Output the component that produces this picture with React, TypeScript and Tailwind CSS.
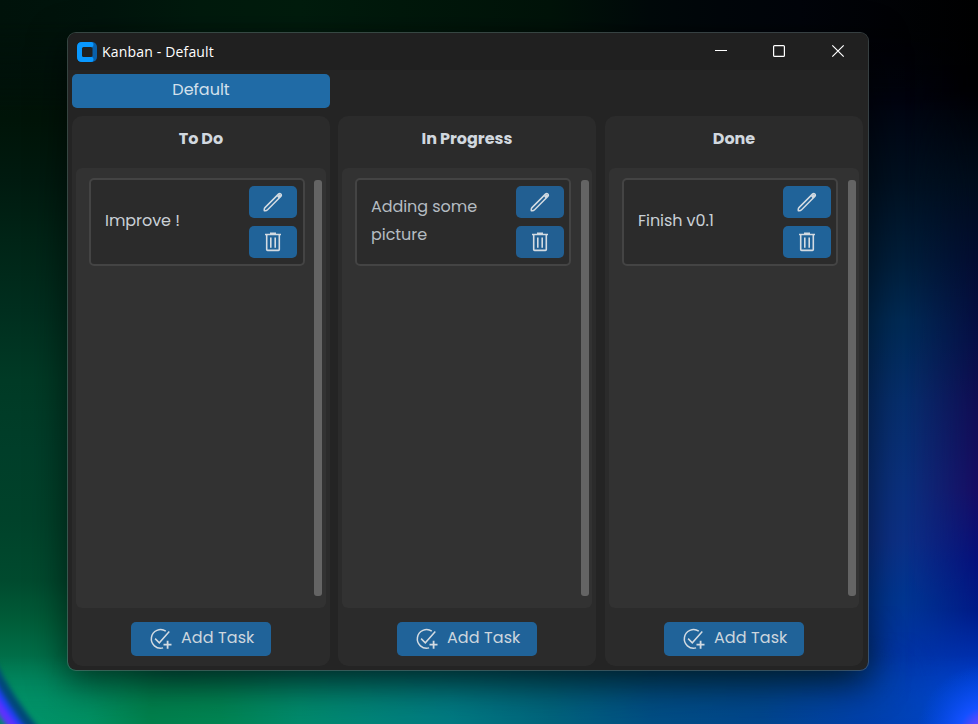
import React from "react";

type ColumnData = { title: string; task: string[]; mid?: boolean; wide?: boolean; x: string };

const COLUMNS: ColumnData[] = [
  { title: "To Do", task: ["Improve !"], x: "ml-0" },
  { title: "In Progress", task: ["Adding some", "picture"], mid: true, wide: true, x: "ml-2" },
  { title: "Done", task: ["Finish v0.1"], wide: true, x: "ml-[9px]" },
];

type Stop = [number, string];

const LEFT: Stop[] = [
  [0, "#00120a"], [60, "#01100a"], [120, "#001408"], [180, "#001a0f"], [240, "#002416"], [310, "#002e1e"],
  [380, "#003a25"], [450, "#003e29"], [520, "#00422a"], [580, "#004a2e"], [620, "#005c38"], [660, "#00704a"], [700, "#008860"],
];
const RIGHT_INNER: Stop[] = [
  [0, "#000306"], [100, "#010410"], [180, "#001020"], [260, "#001e3a"], [320, "#002a54"], [400, "#062e6c"],
  [480, "#0a307c"], [540, "#0c3086"], [600, "#003692"], [650, "#0034a4"], [700, "#0040b4"],
];
const RIGHT_OUTER: Stop[] = [
  [0, "#000000"], [90, "#000003"], [180, "#000c1a"], [260, "#020c30"], [340, "#060e45"], [400, "#100c52"],
  [490, "#170c62"], [560, "#06107a"], [610, "#001a86"], [650, "#002ca8"], [700, "#0040d0"],
];
const BOTTOM: Stop[] = [
  [40, "#009268"], [90, "#009062"], [150, "#00804c"], [220, "#008452"], [300, "#008a6c"], [370, "#008478"], [450, "#007a82"],
  [550, "#00647c"], [650, "#004e84"], [760, "#00468c"], [860, "#0040a8"], [920, "#0042bc"], [978, "#0048e0"],
];
const TOP: Stop[] = [
  [0, "#00120a"], [100, "#00140c"], [200, "#001a0d"], [300, "#001c0d"], [400, "#00180b"], [550, "#001309"],
  [650, "#00090a"], [720, "#00060a"], [800, "#01040a"], [978, "#000000"],
];

function Ramp({ id, stops, across }: { id: string; stops: Stop[]; across?: boolean }) {
  return (
    <linearGradient
      id={id}
      gradientUnits="userSpaceOnUse"
      x1="0"
      y1="0"
      x2={across ? 978 : 0}
      y2={across ? 0 : 724}
    >
      {stops.map(([at, color]) => (
        <stop key={at} offset={at / (across ? 978 : 724)} stopColor={color} />
      ))}
    </linearGradient>
  );
}

function Wallpaper() {
  return (
    <svg className="absolute inset-0" width="978" height="724" viewBox="0 0 978 724">
      <defs>
        <Ramp id="left" stops={LEFT} />
        <Ramp id="inner" stops={RIGHT_INNER} />
        <Ramp id="outer" stops={RIGHT_OUTER} />
        <Ramp id="bottom" stops={BOTTOM} across />
        <Ramp id="top" stops={TOP} across />
        <linearGradient id="fadeRight" gradientUnits="userSpaceOnUse" x1="905" y1="0" x2="978" y2="0">
          <stop offset="0" stopColor="#000" />
          <stop offset="1" stopColor="#fff" />
        </linearGradient>
        <linearGradient id="fadeDown" gradientUnits="userSpaceOnUse" x1="0" y1="655" x2="0" y2="722">
          <stop offset="0" stopColor="#000" />
          <stop offset="1" stopColor="#fff" />
        </linearGradient>
        <linearGradient id="fadeUp" gradientUnits="userSpaceOnUse" x1="0" y1="20" x2="0" y2="110">
          <stop offset="0" stopColor="#fff" />
          <stop offset="1" stopColor="#000" />
        </linearGradient>
        <mask id="maskRight"><rect width="978" height="724" fill="url(#fadeRight)" /></mask>
        <mask id="maskDown"><rect width="978" height="724" fill="url(#fadeDown)" /></mask>
        <mask id="maskUp"><rect width="978" height="724" fill="url(#fadeUp)" /></mask>
        <radialGradient id="glow" gradientUnits="userSpaceOnUse" cx="988" cy="736" r="72">
          <stop offset="0" stopColor="#7a40ff" />
          <stop offset="0.24" stopColor="#5a48ff" />
          <stop offset="0.42" stopColor="#1450ff" />
          <stop offset="1" stopColor="#0048e0" stopOpacity="0" />
        </radialGradient>
        <filter id="fine" x="-50%" y="-50%" width="200%" height="200%" colorInterpolationFilters="sRGB">
          <feGaussianBlur stdDeviation="2.5" />
        </filter>
        <filter id="base" x="-20%" y="-40%" width="140%" height="180%" colorInterpolationFilters="sRGB">
          <feGaussianBlur stdDeviation="22" />
        </filter>
      </defs>
      <rect width="480" height="724" fill="url(#left)" />
      <rect x="480" width="498" height="724" fill="url(#inner)" />
      <rect x="140" y="640" width="720" height="84" fill="#003c44" filter="url(#base)" />
      <rect x="100" y="676" width="790" height="110" fill="url(#bottom)" filter="url(#base)" />
      <rect width="978" height="724" fill="url(#outer)" mask="url(#maskRight)" />
      <rect width="978" height="724" fill="url(#bottom)" mask="url(#maskDown)" />
      <rect width="978" height="724" fill="url(#top)" mask="url(#maskUp)" />
      <rect x="880" y="630" width="98" height="94" fill="url(#glow)" />
      <g fill="none" filter="url(#fine)">
        <path d="M-10 664Q8 702 42 742" stroke="#004878" strokeWidth="12" />
        <path d="M-12 676Q6 710 32 742" stroke="#1c40f4" strokeWidth="8" />
        <path d="M-14 686Q1 713 22 738" stroke="#6030ff" strokeWidth="9" />
        <path d="M-20 706Q-8 724 2 742" stroke="#0a5078" strokeWidth="12" />
      </g>
    </svg>
  );
}

function PencilIcon() {
  return (
    <svg width="20" height="20" viewBox="0 0 20 20" fill="none" stroke="#d3dbe2" strokeWidth="1.5" strokeLinejoin="round">
      <path d="M1.300 18.700q-.4-2 .9-3.300L15.700 1.900q1.100-.9 2.100.1t.2 2.200L4.600 17.800q-1.300 1.300-3.300.9z" />
      <path d="M14.800 3.800l1.700 1.700M16 2.800l1.400 1.400" strokeWidth="2.200" />
    </svg>
  );
}

function TrashIcon() {
  return (
    <svg width="18" height="20" viewBox="0 0 18 20" fill="none" stroke="#d3dbe2" strokeWidth="1.600">
      <path d="M1 2.500h16M6 1.300h6M2.700 3v14.500q0 .9.9.9h10.800q.9 0 .9-.9V3M6.800 5.500v10.200M11.200 5.500v10.200" />
    </svg>
  );
}

function AddIcon() {
  return (
    <svg width="24" height="24" viewBox="0 0 24 24" fill="none" stroke="#d3dbe2" strokeWidth="1.500">
      <path d="M16.800 4.200A9.300 9.300 0 1 0 14.100 20.900" />
      <path d="M6.100 11.600l4.200 4.200L20.300 4.600" />
      <path d="M18.600 13.700v8M14.500 17.700h8" strokeWidth="1.800" />
    </svg>
  );
}

function Column({ title, task, mid, wide, x }: ColumnData) {
  const button = mid ? "bg-[#225f92]" : "bg-[#206399]";
  return (
    <section className={`flex h-[550px] w-[258px] shrink-0 flex-col rounded-[10px] bg-[#2b2b2b] px-1 ${x}`}>
      <h2 className="h-[52px] pt-[11px] text-center text-[16px] leading-6 font-bold [word-spacing:-0.5px] text-[#d1d8df]">
        {title}
      </h2>
      <div className="flex h-[440px] w-[250px] items-start rounded-[6px] bg-[#323232] pt-[10px] pl-[13px]">
        <article className="flex h-[88px] w-[216px] shrink-0 rounded-[5px] border-2 border-[#444] bg-[#2b2b2b]">
          <div
            className={`flex shrink-0 flex-col justify-center pb-[2px] pl-[14px] text-[16px] leading-7 tracking-[-0.06px] whitespace-nowrap ${
              wide ? "w-[159px]" : "w-[158px]"
            } ${mid ? "text-[#b5bcc2]" : "text-[#c9d0d6]"}`}
          >
            {task.map((line) => (
              <span key={line}>{line}</span>
            ))}
          </div>
          <div className="flex flex-col gap-2 pt-[6px]">
            <button className={`flex h-8 w-12 items-center justify-center rounded-[5px] ${button}`}>
              <PencilIcon />
            </button>
            <button className={`flex h-8 w-12 items-center justify-center rounded-[5px] ${button}`}>
              <TrashIcon />
            </button>
          </div>
        </article>
        <div className={`mt-[2px] h-[416px] w-2 shrink-0 rounded-[3px] bg-[#646464] ${wide ? "ml-[10px]" : "ml-[9px]"}`} />
      </div>
      <button className="mt-[14px] ml-[55px] flex h-[34px] w-[140px] items-center rounded-[5px] bg-[#206399] pl-[18px] text-[16px] text-[#cdd6de]">
        <AddIcon />
        <span className="ml-2 pb-[3px] tracking-[0.08px] whitespace-nowrap">Add Task</span>
      </button>
    </section>
  );
}

export default function App() {
  return (
    <div className="relative h-[724px] w-[978px] overflow-hidden font-['Poppins','Inter',sans-serif]">
      <Wallpaper />
      <main className="absolute top-8 left-[67px] h-[639px] w-[802px] overflow-hidden rounded-[9px] border border-[#6b7b7b80] bg-[#242424] bg-clip-padding shadow-[0_12px_36px_2px_rgba(0,0,0,0.55)]">
        <header className="flex h-[37px] items-center bg-[#202020] pl-[9px] font-['Segoe_UI','Open_Sans',sans-serif] text-[14px] text-white">
          <svg width="20" height="20" viewBox="0 0 20 20">
            <rect width="20" height="20" rx="5" fill="#0960aa" />
            <path d="M5 0h9q2.500 0 2.500 2.500T15 5v10q1.500 0 1.500 2.500T14 20H5q-5 0-5-5V5q0-5 5-5Z" fill="#0998ff" />
            <rect x="5" y="5" width="10.500" height="10" rx="1.500" fill="#202020" />
          </svg>
          <span className="ml-[5px] tracking-[0.17px]">Kanban - Default</span>
        </header>
        <button className="mt-1 ml-1 block h-[34px] w-[258px] rounded-[5px] bg-[#206ba6] pb-[3px] text-center text-[16px] text-[#d3e0ec]">
          Default
        </button>
        <div className="mt-2 ml-1 flex">
          {COLUMNS.map((column) => (
            <Column key={column.title} {...column} />
          ))}
        </div>
      </main>
      <svg className="absolute top-[40px] left-[700px]" width="160" height="24" viewBox="0 0 160 24" fill="none" stroke="#fff">
        <path d="M15 10.500h12M132.300 5.300l11.400 11.400M143.700 5.300l-11.400 11.400" strokeWidth="1.200" />
        <rect x="73.600" y="5.600" width="10.800" height="10.800" rx="1" strokeWidth="1.200" />
      </svg>
    </div>
  );
}
